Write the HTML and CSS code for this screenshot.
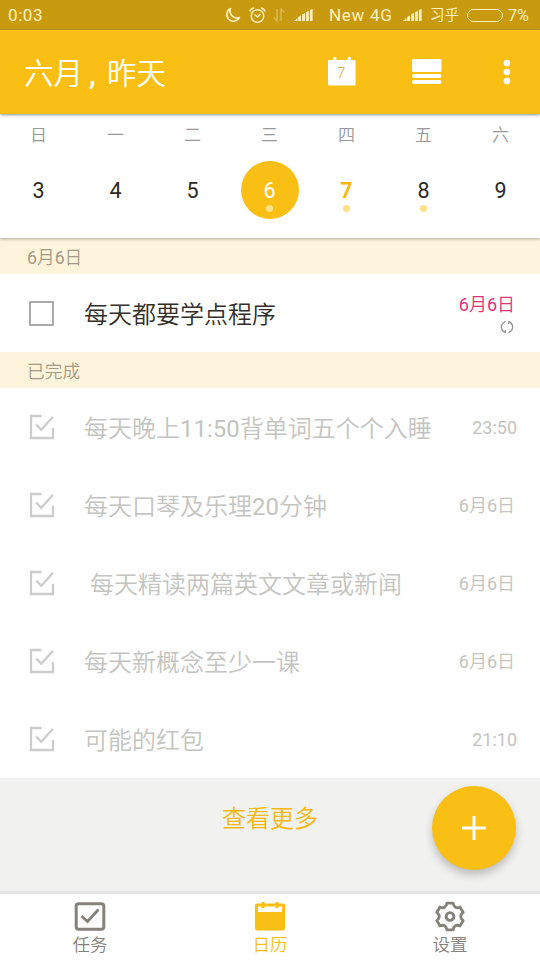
FILE: index.html
```html
<!DOCTYPE html>
<html lang="zh-CN">
<head>
<meta charset="utf-8">
<title>日历</title>
<link rel="stylesheet" href="styles.css">
</head>
<body>
<svg class="defs" width="0" height="0">
  <symbol id="done" viewBox="0 0 26 26"><path d="M12.5 2H2v22h22V14M7.200 10.500l5 5.200L24 2.800" fill="none" stroke="currentColor" stroke-width="2.3"/></symbol>
  <symbol id="signal" viewBox="0 0 19 12"><path d="M0 12l3.500-3v3zM4.200 12V8L7 6.500V12zM8.200 12V5.500L11 4v8zM12.100 12V3l2.700-1v10zM15.900 12V1l2.700-1v12z" fill="currentColor"/></symbol>
</svg>
<div class="screen">
  <div class="status">
    <span class="clock">0:03</span>
    <svg class="moon" width="16" height="16" viewBox="0 0 16 16"><path d="M5.500 1.500A7 7 0 0 0 14.500 10.500 6.700 6.700 0 1 1 5.500 1.500z" fill="none" stroke="currentColor" stroke-width="1.6" stroke-linejoin="round"/></svg>
    <svg class="alarm" width="17" height="17" viewBox="0 0 17 17"><g fill="none" stroke="currentColor" stroke-width="1.4"><circle cx="8.500" cy="9" r="6.300"/><path d="M5.500 7.500L8.500 10l3-3M.8 4.500Q2 1.500 5 1M16.200 4.500Q15 1.500 12 1"/></g></svg>
    <svg class="arrows" width="12" height="14" viewBox="0 0 12 14"><path d="M4 1v12L.8 9.500M8 13V1l3.200 3.500" fill="none" stroke="currentColor" stroke-width="1.8"/></svg>
    <svg class="signal one" width="19" height="12"><use href="#signal"/></svg>
    <span class="carrier">New 4G</span>
    <svg class="signal two" width="19" height="12"><use href="#signal"/></svg>
    <span class="carrier-cn">习乎</span>
    <span class="battery"></span>
    <span class="percent">7%</span>
  </div>
  <header class="appbar">
    <h1>六月<span class="comma">,</span>昨天</h1>
    <svg class="today" width="28" height="30" viewBox="0 0 28 30"><path d="M1 3h4V1.500a1.700 1.700 0 0 1 3.400 0V3h11.200V1.500a1.700 1.700 0 0 1 3.400 0V3h3.500q1 0 1 1v23.500q0 1-1 1H1q-1 0-1-1V4q0-1 1-1z" fill="#fff"/><text x="13.200" y="21.200" text-anchor="middle" class="today-num">7</text></svg>
    <svg class="view" width="30" height="26" viewBox="0 0 30 26"><g fill="#fff"><rect width="29.500" height="13" rx="1.500"/><rect y="15" width="29.500" height="4" rx="2"/><rect y="21" width="29.500" height="4" rx="2"/></g></svg>
    <svg class="more" width="8" height="26" viewBox="0 0 8 26"><g fill="#fff"><circle cx="4" cy="4" r="3.300"/><circle cx="4" cy="13" r="3.300"/><circle cx="4" cy="22" r="3.300"/></g></svg>
  </header>
  <section class="week">
    <div class="day"><span class="name">日</span><span class="num">3</span></div>
    <div class="day"><span class="name">一</span><span class="num">4</span></div>
    <div class="day"><span class="name">二</span><span class="num">5</span></div>
    <div class="day"><span class="name">三</span><span class="num selected dot">6</span></div>
    <div class="day"><span class="name">四</span><span class="num current dot">7</span></div>
    <div class="day"><span class="name">五</span><span class="num dot">8</span></div>
    <div class="day"><span class="name">六</span><span class="num">9</span></div>
  </section>
  <main>
    <h2 class="label first"><b>6</b>月<b>6</b>日</h2>
    <div class="task open">
      <span class="box"></span><span class="text">每天都要学点程序</span>
      <span class="meta"><span class="due"><b>6</b>月<b>6</b>日</span>
        <svg class="repeat" width="14" height="14" viewBox="0 0 14 14"><g fill="none" stroke="#959595" stroke-width="1.3"><path d="M5.800 12.500A5.600 5.600 0 0 1 3.200 2.900M8.200 1.500a5.600 5.600 0 0 1 2.600 9.600M2.800 3.200L5.600 1.200M11.200 10.800l-2.800 2M5 12.600l.4-2.600M9 1.400l-.4 2.600"/></g></svg></span>
    </div>
    <h2 class="label">已完成</h2>
    <div class="task"><svg class="check"><use href="#done"/></svg><span class="text">每天晚上<b>11:50</b>背单词五个个入睡</span><span class="date time"><b>23:50</b></span></div>
    <div class="task"><svg class="check"><use href="#done"/></svg><span class="text">每天口琴及乐理<b>20</b>分钟</span><span class="date"><b>6</b>月<b>6</b>日</span></div>
    <div class="task"><svg class="check"><use href="#done"/></svg><span class="text indent">每天精读两篇英文文章或新闻</span><span class="date"><b>6</b>月<b>6</b>日</span></div>
    <div class="task"><svg class="check"><use href="#done"/></svg><span class="text">每天新概念至少一课</span><span class="date"><b>6</b>月<b>6</b>日</span></div>
    <div class="task"><svg class="check"><use href="#done"/></svg><span class="text">可能的红包</span><span class="date time"><b>21:10</b></span></div>
  </main>
  <div class="footer">查看更多</div>
  <nav class="tabs">
    <div class="tab"><svg width="32" height="30" viewBox="0 0 32 30"><rect x="2.200" y="2.200" width="27.600" height="25.600" rx="2.500" fill="none" stroke="currentColor" stroke-width="3"/><path d="M7.500 14.500l6 5.500L24.500 8" fill="none" stroke="currentColor" stroke-width="2.8"/></svg><span>任务</span></div>
    <div class="tab active"><svg width="32" height="30" viewBox="0 0 32 30"><path d="M3 2h4.500V.5h3V2h11V.5h3V2H29q2 0 2 2v22.500q0 2.500-2.500 2.500h-25Q1 29 1 26.500V4q0-2 2-2z" fill="currentColor"/><path d="M4 5h3.500v1.500h3V5h11v1.500h3V5H28v5.500H4z" fill="#fff"/></svg><span>日历</span></div>
    <div class="tab"><svg width="32" height="32" viewBox="0 0 32 32"><g fill="none" stroke="currentColor" stroke-width="3" stroke-linejoin="round"><path d="M12.800 2.200H19.200Q20.250 8.600 26.400 6.300L29.600 11.850Q24.500 16 29.600 20.150L26.400 25.700Q20.250 23.400 19.200 29.800H12.800Q11.750 23.400 5.600 25.700L2.400 20.150Q7.500 16 2.400 11.850L5.600 6.300Q11.750 8.600 12.800 2.200z"/><circle cx="16" cy="16" r="4"/></g></svg><span>设置</span></div>
  </nav>
  <button class="fab" aria-label="添加"><svg width="26" height="26" viewBox="0 0 26 26"><path d="M13 1v24M1 13h24" stroke="#fff" stroke-width="3"/></svg></button>
</div>
</body>
</html>
```
FILE: styles.css
```css
* { box-sizing: border-box; }
body { margin: 0; font-family: Roboto, "Noto Sans CJK SC", sans-serif; font-weight: 350; }
b { font-weight: 400; }
.defs { position: absolute; }
.screen { position: relative; width: 540px; height: 960px; display: flex; flex-direction: column; overflow: hidden; background: #fff; }
svg { flex: none; display: block; }
h1, h2 { margin: 0; font-weight: 350; }

.status { height: 30px; flex: none; background: #c79a10; color: #fff0bd; display: flex; align-items: center; padding-right: 9px; font-size: 16px; font-weight: 400; white-space: nowrap; }
.clock { margin-left: 8px; width: 217px; font-size: 17px; letter-spacing: .6px; }
.alarm { margin-left: 8px; }
.arrows { margin-left: 7px; opacity: .3; }
.signal.one { margin-left: 9px; }
.carrier { margin-left: 16px; width: 64px; font-size: 17px; letter-spacing: .7px; }
.signal.two { margin-left: 10px; }
.carrier-cn { margin-left: 8px; width: 30px; font-size: 14.500px; line-height: 20px; padding-top: 2px; }
.battery { margin-left: 7px; width: 36px; height: 13px; border: 1.500px solid #fff0bd; border-radius: 7px; flex: none; }
.percent { margin-left: 5px; }

.appbar { height: 84px; flex: none; background: #f9bf15; color: #fff; display: flex; align-items: center; padding-left: 24px; position: relative; z-index: 2; box-shadow: 0 1px 3px rgba(60,80,90,.6); }
h1 { width: 304px; font-size: 29.500px; line-height: 40px; padding-top: 4px; height: 44px; white-space: nowrap; }
.comma { display: inline-block; width: 24px; padding-left: 6px; font-weight: 500; }
.today-num { font-size: 15px; fill: #d5a62b; }
.view { margin-left: 56px; }
.more { margin-left: 61px; }

.week { height: 124px; flex: none; display: flex; padding-right: 1px; background: #fff; position: relative; z-index: 1; box-shadow: 0 1px 3px rgba(80,60,60,.45); }
.day { flex: 1; display: flex; flex-direction: column; align-items: center; }
.name { height: 47px; padding-top: 9px; font-size: 17px; line-height: 24px; color: #999; }
.num { width: 58px; height: 58px; border-radius: 50%; line-height: 60px; text-align: center; font-size: 21.500px; font-weight: 400; color: #2d2a26; position: relative; }
.selected { background: #f9bf15; color: #fff; }
.current { color: #f5b914; font-weight: 700; }
.dot::after { content: ""; position: absolute; left: 25.500px; top: 44px; width: 7px; height: 7px; border-radius: 50%; background: #fce08a; }

.label { height: 36px; background: #fef4dc; color: #a49a86; font-size: 17.700px; line-height: 36px; padding-top: 2px; padding-left: 27px; }
.task { height: 78px; display: flex; align-items: center; padding: 0 23px 0 29px; color: #c4c4c1; }
.box { width: 25px; height: 25px; border: 2px solid #aaa; border-radius: 1px; }
.check { width: 26px; height: 26px; color: #ccc; }
.text { margin-left: 29px; font-size: 24px; line-height: 34px; white-space: nowrap; padding-top: 4px; }
.open .text { color: #332e28; margin-left: 30px; }
.indent { margin-left: 35px; }
.date { margin-left: auto; font-size: 18px; line-height: 24px; padding-top: 2px; margin-right: 2px; }
.time { margin-right: 0; padding-top: 2px; }
.meta { margin-left: auto; display: flex; flex-direction: column; align-items: flex-end; margin-right: 2px; }
.due { color: #e0327b; font-size: 18px; line-height: 24px; margin-bottom: 3px; }
.repeat { margin-right: 1px; }

.footer { height: 116px; flex: none; background: #f1f1ef; border-bottom: 3px solid #e5e5e3; color: #f5b914; text-align: center; font-size: 24px; line-height: 82px; }
.tabs { height: 66px; flex: none; display: flex; background: #fff; }
.tab { flex: 1; display: flex; flex-direction: column; align-items: center; padding-top: 7px; color: #85817b; font-size: 17.500px; }
.tab svg { height: 31px; }
.tab span { line-height: 26px; }
.tab.active { color: #f9bf15; }
.fab { position: absolute; left: 432px; top: 786px; width: 84px; height: 84px; padding: 0; border: 0; border-radius: 50%; background: #f9bf15; display: flex; align-items: center; justify-content: center; box-shadow: 0 5px 9px rgba(0,0,0,.22); }
```
